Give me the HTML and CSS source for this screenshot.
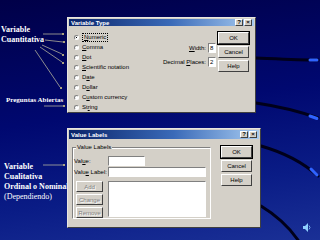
FILE: index.html
```html
<!DOCTYPE html>
<html lang="es">
<head>
  <meta charset="UTF-8" />
  <title>Variable Type / Value Labels</title>
  <link rel="stylesheet" href="styles.css">
</head>
<body>
  <div class="slide">
    <svg class="deco" width="320" height="240" viewBox="0 0 320 240">
      <g fill="none" stroke-linecap="round">
        <path d="M256 58 C 280 59 300 60 318 60" stroke="#00001a" stroke-width="3"/>
        <path d="M256 103 Q 290 108 318 118" stroke="#00001a" stroke-width="3"/>
        <path d="M261 146 Q 296 156 318 176" stroke="#00001a" stroke-width="3"/>
        <path d="M261 206 Q 284 220 298 240" stroke="#00001a" stroke-width="3"/>
        <path d="M310 60 L317 60" stroke="#2f63ff" stroke-width="3"/>
        <path d="M310 116 L317 118.5" stroke="#2f63ff" stroke-width="3"/>
        <path d="M311 169 L317 175" stroke="#2f63ff" stroke-width="3"/>
      </g>
      <g stroke="#c9c7a4" stroke-width="0.7" fill="none">
        <path d="M43 34 L62 34"/>
        <path d="M45 40 L63 42"/>
        <path d="M42 45 L62 54"/>
        <path d="M40 47 L62 62"/>
        <path d="M35 50 L60 87"/>
        <path d="M44 106 L63 106"/>
        <path d="M43 165 L63 165"/>
      </g>
      <g fill="#e6d98a">
        <circle cx="63" cy="34" r="1"/>
        <circle cx="64" cy="42" r="1"/>
        <circle cx="63" cy="55" r="1"/>
        <circle cx="63" cy="63" r="1"/>
        <circle cx="61" cy="88" r="1"/>
        <circle cx="64" cy="106" r="1"/>
        <circle cx="64" cy="165" r="1"/>
      </g>
      <path d="M303 226 L305 226 L308 223 L308 232 L305 229 L303 229 Z" fill="#8fd0ff"/>
      <path d="M309 225.5 Q 311 227.5 309 229.5" stroke="#8fd0ff" stroke-width="0.8" fill="none"/>
    </svg>

    <div class="row row-top">
      <div class="notes notes-top">
        <p class="note">Variable<br>Cuantitativa</p>
        <p class="note note-small">Preguntas Abiertas</p>
      </div>
      <div class="dialog dlg-type">
        <div class="titlebar">
          <span>Variable Type</span>
          <span class="tb-btns"><i>?</i><i>×</i></span>
        </div>
        <div class="dlg-body">
          <div class="radios">
            <div class="radio"><span class="dot on"></span><span class="focus"><u>N</u>umeric</span></div>
            <div class="radio"><span class="dot"></span><span><u>C</u>omma</span></div>
            <div class="radio"><span class="dot"></span><span><u>D</u>ot</span></div>
            <div class="radio"><span class="dot"></span><span><u>S</u>cientific notation</span></div>
            <div class="radio"><span class="dot"></span><span>D<u>a</u>te</span></div>
            <div class="radio"><span class="dot"></span><span>D<u>o</u>llar</span></div>
            <div class="radio"><span class="dot"></span><span>C<u>u</u>stom currency</span></div>
            <div class="radio"><span class="dot"></span><span>St<u>r</u>ing</span></div>
          </div>
          <div class="fields">
            <div class="field"><span><u>W</u>idth:</span><span class="input small">8</span></div>
            <div class="field"><span>Decimal <u>P</u>laces:</span><span class="input small">2</span></div>
          </div>
          <div class="buttons">
            <span class="btn default">OK</span>
            <span class="btn">Cancel</span>
            <span class="btn">Help</span>
          </div>
        </div>
      </div>
    </div>

    <div class="row row-bottom">
      <div class="notes notes-bottom">
        <p class="note">Variable<br>Cualitativa<br>Ordinal o Nominal</p>
        <p class="note plain">(Dependiendo)</p>
      </div>
      <div class="dialog dlg-labels">
        <div class="titlebar">
          <span>Value Labels</span>
          <span class="tb-btns"><i>?</i><i>×</i></span>
        </div>
        <div class="dlg-body">
          <div class="group">
            <span class="legend">Value Labels</span>
            <div class="group-grid">
              <span class="lbl">Val<u>u</u>e:</span>
              <span class="input value"></span>
              <span class="lbl">Valu<u>e</u> Label:</span>
              <span class="input"></span>
              <div class="side-btns">
                <span class="btn off">Add</span>
                <span class="btn off">Change</span>
                <span class="btn off">Remove</span>
              </div>
              <span class="input list"></span>
            </div>
          </div>
          <div class="buttons">
            <span class="btn default">OK</span>
            <span class="btn">Cancel</span>
            <span class="btn">Help</span>
          </div>
        </div>
      </div>
    </div>
  </div>
</body>
</html>
```

FILE: styles.css
```css
* { box-sizing: border-box; }

body {
  margin: 0;
  width: 320px;
  height: 240px;
  overflow: hidden;
  background: #00084f;
}

.slide {
  position: relative;
  width: 320px;
  height: 240px;
  padding-top: 17px;
  display: flex;
  flex-direction: column;
  gap: 15px;
  background: linear-gradient(172deg, #000048 0%, #000870 45%, #0a1c86 75%, #1a3096 100%);
}

.deco {
  position: absolute;
  top: 0;
  left: 0;
}

.row {
  display: flex;
}

/* left side notes */
.notes {
  width: 67px;
  flex: none;
  display: flex;
  flex-direction: column;
  color: #fff;
  font-family: "Liberation Serif", serif;
  position: relative;
}

.note {
  margin: 0;
  font-weight: bold;
  font-size: 8px;
  line-height: 10px;
  white-space: nowrap;
}

.note-small {
  font-size: 7px;
  margin-top: auto;
  margin-bottom: 8px;
  padding-left: 5px;
}

.notes-top {
  padding-top: 8px;
  padding-left: 1px;
}

.notes-bottom {
  padding-top: 34px;
  padding-left: 4px;
}

.note.plain {
  font-weight: normal;
}

/* windows dialog */
.dialog {
  position: relative;
  background: #d4d0c8;
  border: 1px solid;
  border-color: #e8e6e0 #404040 #404040 #e8e6e0;
  font-family: "Liberation Sans", Arial, sans-serif;
  font-size: 6px;
  color: #000;
  display: flex;
  flex-direction: column;
}

.dlg-type {
  width: 189px;
  height: 96px;
}

.dlg-labels {
  width: 194px;
  height: 100px;
}

.titlebar {
  height: 9px;
  margin: 1px;
  padding: 0 2px;
  display: flex;
  align-items: center;
  justify-content: space-between;
  background: linear-gradient(to right, #0a246a, #3a6ab8 55%, #a6caf0);
  color: #fff;
  font-weight: bold;
  font-size: 6px;
}

.tb-btns {
  display: flex;
  gap: 1px;
}

.tb-btns i {
  width: 8px;
  height: 7px;
  background: #d4d0c8;
  border: 1px solid;
  border-color: #fff #404040 #404040 #fff;
  color: #000;
  font-style: normal;
  font-weight: bold;
  font-size: 6px;
  line-height: 5px;
  text-align: center;
}

.dlg-body {
  flex: 1;
  display: flex;
  padding: 5px 6px 0 6px;
}

/* variable type */
.radios {
  display: flex;
  flex-direction: column;
  width: 72px;
}

.radio {
  height: 10px;
  display: flex;
  align-items: center;
  gap: 3px;
  white-space: nowrap;
}

.dot {
  width: 5px;
  height: 5px;
  border-radius: 50%;
  background: #fff;
  border: 1px solid;
  border-color: #808080 #fff #fff #808080;
  flex: none;
  position: relative;
}

.dot.on::after {
  content: "";
  position: absolute;
  left: 1px;
  top: 1px;
  width: 1px;
  height: 1px;
  background: #000;
}

.focus {
  border: 1px dotted #000;
  padding: 0 1px;
  line-height: 7px;
}

.fields {
  width: 70px;
  padding-top: 11px;
  display: flex;
  flex-direction: column;
  gap: 4px;
  align-items: flex-end;
}

.field {
  display: flex;
  align-items: center;
  gap: 2px;
}

.input {
  background: #fff;
  border: 1px solid;
  border-color: #808080 #fff #fff #808080;
  height: 10px;
  display: block;
  line-height: 8px;
  padding-left: 1px;
}

.input.small {
  width: 8px;
}

.buttons {
  margin-left: auto;
  display: flex;
  flex-direction: column;
  gap: 2px;
}

.btn {
  width: 31px;
  height: 12px;
  border: 1px solid;
  border-color: #fff #404040 #404040 #fff;
  display: flex;
  align-items: center;
  justify-content: center;
}

.btn.default {
  outline: 1px solid #000;
}

.btn.off {
  width: 27px;
  height: 11px;
  color: #808080;
  text-shadow: 1px 1px 0 #fff;
}

/* value labels */
.dlg-labels .dlg-body {
  padding: 6px 8px 0 4px;
}

.group {
  position: relative;
  width: 139px;
  height: 72px;
  margin-top: 1px;
  border: 1px solid;
  border-color: #808080 #fff #fff #808080;
  box-shadow: inset 1px 1px 0 #fff;
  padding: 8px 4px 0 1px;
}

.legend {
  position: absolute;
  top: -4px;
  left: 3px;
  padding: 0 1px;
  background: #d4d0c8;
}

.group-grid {
  display: grid;
  grid-template-columns: 34px 98px;
  row-gap: 1px;
  align-items: center;
}

.input.value {
  width: 37px;
}

.side-btns {
  display: flex;
  flex-direction: column;
  gap: 2px;
  padding-left: 2px;
  margin-top: 3px;
  align-self: start;
}

.input.list {
  height: 36px;
  margin-top: 3px;
  align-self: start;
}
```
